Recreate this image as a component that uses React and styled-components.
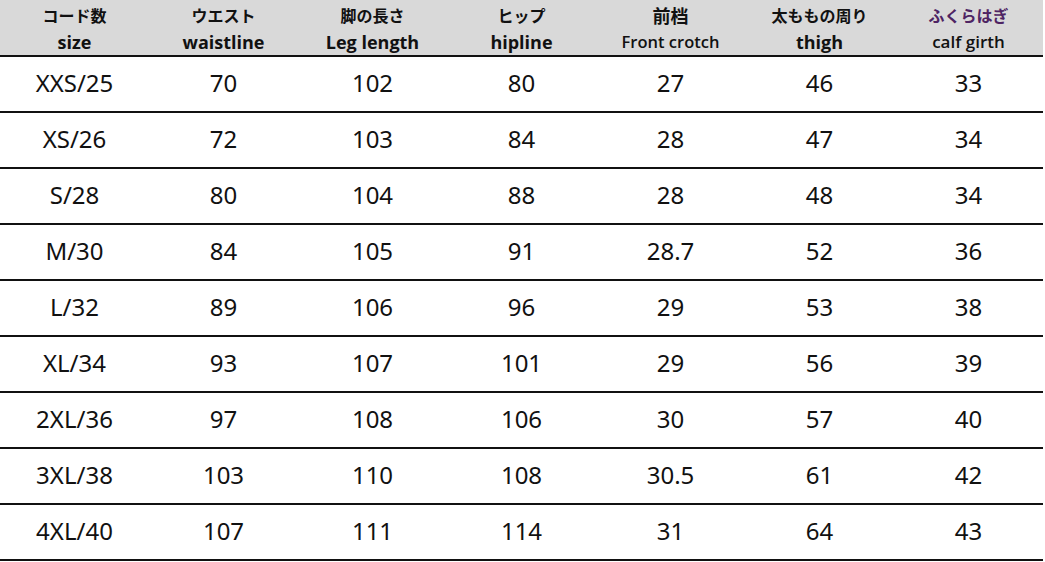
import React from "react";
import styled, { createGlobalStyle } from "styled-components";

const GlobalStyle = createGlobalStyle`
  html, body {
    margin: 0;
    padding: 0;
    background: #fff;
  }
  body {
    font-family: "Noto Sans", "Noto Sans CJK JP", sans-serif;
  }
`;

const Table = styled.div`
  width: 1043px;
  display: grid;
  grid-template-columns: repeat(7, 149px);
`;

const HeadCell = styled.div`
  height: 55px;
  background: #d9d9d9;
  border-bottom: 2px solid #111;
  display: flex;
  flex-direction: column;
  align-items: center;
  color: #111;
  font-weight: 700;
`;

const HeadJp = styled.div`
  font-family: "Noto Sans CJK JP", sans-serif;
  font-size: ${(p) => p.$size || 16}px;
  color: ${(p) => p.$color || "#111"};
  height: 26px;
  line-height: 30px;
`;

const HeadEn = styled.div`
  font-family: "Open Sans", "Noto Sans", sans-serif;
  font-size: ${(p) => p.$size || 18}px;
  font-weight: ${(p) => p.$weight || 700};
  line-height: 32px;
`;

const Cell = styled.div`
  height: 56px;
  box-sizing: border-box;
  border-bottom: 2px solid #111;
  display: flex;
  align-items: center;
  justify-content: center;
  padding-bottom: 3px;
  font-family: "Noto Sans", "Open Sans", sans-serif;
  font-size: 24px;
  color: #111;
`;

const heads = [
  { jp: "コード数", en: "size" },
  { jp: "ウエスト", en: "waistline" },
  { jp: "脚の長さ", en: "Leg length" },
  { jp: "ヒップ", en: "hipline" },
  { jp: "前档", en: "Front crotch", jpSize: 18, enSize: 16.5, enWeight: 600 },
  { jp: "太ももの周り", en: "thigh" },
  { jp: "ふくらはぎ", en: "calf girth", color: "#4e2463", enSize: 17, enWeight: 600 },
];

const rows = [
  ["XXS/25", 70, 102, 80, 27, 46, 33],
  ["XS/26", 72, 103, 84, 28, 47, 34],
  ["S/28", 80, 104, 88, 28, 48, 34],
  ["M/30", 84, 105, 91, 28.7, 52, 36],
  ["L/32", 89, 106, 96, 29, 53, 38],
  ["XL/34", 93, 107, 101, 29, 56, 39],
  ["2XL/36", 97, 108, 106, 30, 57, 40],
  ["3XL/38", 103, 110, 108, 30.5, 61, 42],
  ["4XL/40", 107, 111, 114, 31, 64, 43],
];

export default function App() {
  return (
    <>
      <GlobalStyle />
      <Table>
        {heads.map((h) => (
          <HeadCell key={h.en}>
            <HeadJp $size={h.jpSize} $color={h.color}>
              {h.jp}
            </HeadJp>
            <HeadEn $size={h.enSize} $weight={h.enWeight}>
              {h.en}
            </HeadEn>
          </HeadCell>
        ))}
        {rows.map((r) =>
          r.map((v, i) => <Cell key={r[0] + i}>{v}</Cell>)
        )}
      </Table>
    </>
  );
}
